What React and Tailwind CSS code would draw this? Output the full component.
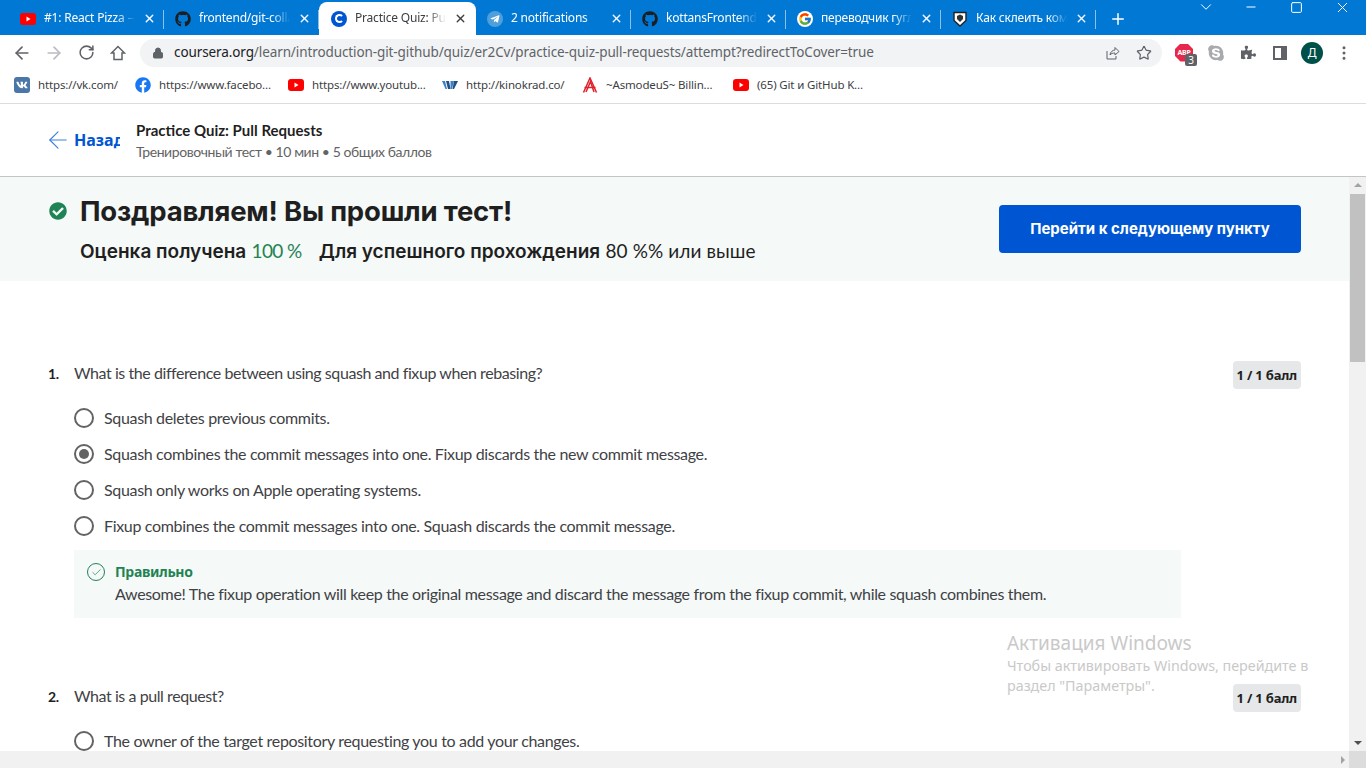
import { ArrowLeft, ArrowRight, RotateCw, Lock, Star, Plus, X, Minus, Square, ChevronDown, EllipsisVertical, Check } from "lucide-react";
import { FaGithub, FaTelegramPlane, FaVk, FaFacebook, FaSkype, FaPuzzlePiece, FaCheckCircle } from "react-icons/fa";
import { FcGoogle } from "react-icons/fc";

const YouTube = () => (
  <svg viewBox="0 0 16 16" className="w-4 h-4 shrink-0">
    <rect x="0" y="2" width="16" height="12" rx="3" fill="#f00" />
    <path d="M6.5 5.5v5l4-2.5z" fill="#fff" />
  </svg>
);

const Coursera = () => (
  <span className="w-4 h-4 shrink-0 rounded-full bg-[#0056d2] flex items-center justify-center">
    <span className="w-[9px] h-[9px] rounded-full border-2 border-white border-r-transparent" />
  </span>
);

const Telegram = () => (
  <span className="w-4 h-4 shrink-0 rounded-full bg-[#4f9fdc] flex items-center justify-center text-white">
    <FaTelegramPlane size={10} />
  </span>
);

const Shield = () => (
  <svg viewBox="0 0 16 16" className="w-4 h-4 shrink-0">
    <path d="M2 1.5h12v8L8 15 2 9.5z" fill="#fff" stroke="#222" strokeWidth="1.4" />
    <path d="M5 5l3-1.500L11 5v3l-3 3-3-3z" fill="#333" />
  </svg>
);

const Kinokrad = () => (
  <svg viewBox="0 0 16 16" className="w-4 h-4 shrink-0">
    <path d="M0 4h3l2 8h-1.500z" fill="#3b82c4" />
    <path d="M4 4h3l1.500 8H6z" fill="#1e4f86" />
    <path d="M8.500 4H12l-2 8H8.500z" fill="#3b82c4" />
    <path d="M12 4h4l-4 8h-1.500z" fill="#1e4f86" />
  </svg>
);

const RedA = () => (
  <svg viewBox="0 0 16 16" className="w-4 h-4 shrink-0" fill="none" stroke="#e0222b" strokeWidth="1.500">
    <path d="M1.500 15.500 8 1l6.500 14.500" />
    <path d="M4 15 8.500 4.500 12 15" />
    <path d="M2.500 10.500h11" />
  </svg>
);

const tabs = [
  { title: "#1: React Pizza — кур", icon: <YouTube /> },
  { title: "frontend/git-collab", icon: <FaGithub size={16} className="shrink-0 text-[#1b1f23]" /> },
  { title: "Practice Quiz: Pull Requests", icon: <Coursera />, active: true },
  { title: "2 notifications", icon: <Telegram /> },
  { title: "kottansFrontend/git", icon: <FaGithub size={16} className="shrink-0 text-[#1b1f23]" /> },
  { title: "переводчик гугл", icon: <span className="w-4 h-4 shrink-0 rounded-full bg-white flex items-center justify-center"><FcGoogle size={14} /></span> },
  { title: "Как склеить коммиты", icon: <Shield /> },
];

const bookmarks = [
  { label: "https://vk.com/", w: "w-[81px]", icon: <span className="w-4 h-4 shrink-0 rounded-[3px] bg-[#4a76a8] flex items-center justify-center text-white"><FaVk size={12} /></span> },
  { label: "https://www.facebo...", w: "w-[113px]", icon: <FaFacebook size={16} className="shrink-0 text-[#1877f2]" /> },
  { label: "https://www.youtub...", w: "w-[114px]", icon: <YouTube /> },
  { label: "http://kinokrad.co/", w: "w-[100px]", icon: <Kinokrad /> },
  { label: "~AsmodeuS~ Billin...", w: "w-[111px]", icon: <RedA /> },
  { label: "(65) Git и GitHub K...", w: "w-[109px]", icon: <YouTube /> },
];

const questions = [
  {
    n: "1.",
    text: "What is the difference between using squash and fixup when rebasing?",
    options: [
      { text: "Squash deletes previous commits." },
      { text: "Squash combines the commit messages into one. Fixup discards the new commit message.", checked: true },
      { text: "Squash only works on Apple operating systems." },
      { text: "Fixup combines the commit messages into one. Squash discards the commit message." },
    ],
    feedback: "Awesome! The fixup operation will keep the original message and discard the message from the fixup commit, while squash combines them.",
  },
  {
    n: "2.",
    text: "What is a pull request?",
    options: [{ text: "The owner of the target repository requesting you to add your changes." }],
  },
];

function Tab({ tab }) {
  if (tab.active) {
    return (
      <div className="w-[157px] h-[33px] shrink-0 bg-white rounded-t-lg flex items-center pl-[12px] pr-[9px] gap-[8px] text-[#3c4043]">
        {tab.icon}
        <span className="flex-1 -mt-[2px] overflow-hidden whitespace-nowrap tracking-[-0.2px] [mask-image:linear-gradient(to_right,black_80%,transparent)]">{tab.title}</span>
        <X size={13} strokeWidth={2.5} className="shrink-0" />
      </div>
    );
  }
  return (
    <div className="w-[155px] h-[33px] shrink-0 flex items-center pl-[11px] pr-[8px] gap-[8px] text-white relative">
      {tab.icon}
      <span className="flex-1 -mt-[2px] overflow-hidden whitespace-nowrap tracking-[-0.2px] [mask-image:linear-gradient(to_right,black_80%,transparent)]">{tab.title}</span>
      <X size={13} strokeWidth={2.5} className="shrink-0" />
      <span className="absolute right-0 top-[8px] h-[19px] w-px bg-[#8fc1e8]" />
    </div>
  );
}

function Radio({ checked }) {
  return (
    <span className="w-5 h-5 shrink-0 rounded-full border-2 border-[#636363] flex items-center justify-center">
      {checked && <span className="w-[10px] h-[10px] rounded-full bg-[#636363]" />}
    </span>
  );
}

function Question({ q }) {
  return (
    <section>
      <div className="flex items-center h-7">
        <span className="w-[26px] pb-[3px] text-[14px] font-bold text-[#1f1f1f]">{q.n}</span>
        <p className="flex-1 pb-[4px] tracking-[-0.43px]">{q.text}</p>
        <span className="h-7 px-[4px] pt-[1px] flex items-center rounded bg-[#e5e7e8] text-[13px] font-bold tracking-[-0.2px] text-[#1f1f1f] font-['Noto_Sans',sans-serif]">1 / 1 балл</span>
      </div>
      <div className="ml-[26px] mt-[11px] flex flex-col">
        {q.options.map((o) => (
          <div key={o.text} className="h-9 flex items-center gap-[10px]">
            <Radio checked={o.checked} />
            <span>{o.text}</span>
          </div>
        ))}
        {q.feedback && (
          <div className="mt-[6px] w-[1107px] h-[68px] bg-[#f5f9f8] flex pl-[13px] pt-[12px] gap-[10px]">
            <span className="w-[18px] h-[18px] mt-[1px] rounded-full border border-[#1f8354] flex items-center justify-center text-[#1f8354]">
              <Check size={11} strokeWidth={1.5} />
            </span>
            <div>
              <p className="text-[14px] leading-[20px] font-bold text-[#1f8354] font-['Noto_Sans',sans-serif]">Правильно</p>
              <p className="leading-[24px]">{q.feedback}</p>
            </div>
          </div>
        )}
      </div>
    </section>
  );
}

export default function App() {
  return (
    <div className="h-screen flex flex-col overflow-hidden bg-white text-[#3f4245] font-['Noto_Sans',sans-serif] relative">
      {/* tab strip */}
      <div className="h-[35px] shrink-0 bg-[#0078d4] flex items-end pl-[9px] text-[12px] text-white">
        <div className="flex items-center">
          {tabs.map((t) => (
            <Tab key={t.title} tab={t} />
          ))}
          <Plus size={18} strokeWidth={2} className="ml-[13px]" />
        </div>
        <div className="flex-1 self-start flex justify-end items-center h-[14px] text-white">
          <ChevronDown size={18} strokeWidth={1} absoluteStrokeWidth className="mr-[29px]" />
          <Minus size={14} strokeWidth={1} absoluteStrokeWidth className="mr-[32px]" />
          <Square size={13} strokeWidth={1} absoluteStrokeWidth className="mr-[31px]" />
          <X size={17} strokeWidth={1} absoluteStrokeWidth className="mr-[15px]" />
        </div>
      </div>

      {/* toolbar */}
      <div className="h-[35px] shrink-0 flex items-center text-[#5f6368]">
        <div className="w-[140px] shrink-0 flex items-center pl-[6px]">
          <span className="w-8 flex justify-center"><ArrowLeft size={20} /></span>
          <span className="w-8 flex justify-center"><ArrowRight size={20} className="text-[#b9bcc0]" /></span>
          <span className="w-8 flex justify-center"><RotateCw size={17} strokeWidth={2.2} /></span>
          <span className="w-8 flex justify-center">
            <svg viewBox="0 0 16 16" className="w-4 h-4" fill="none" stroke="currentColor" strokeWidth="1.500">
              <path d="M8 1.500 1.500 8H4v6.500h8V8h2.500z" />
            </svg>
          </span>
        </div>
        <div className="w-[1022px] shrink-0 h-7 rounded-full bg-[#f1f3f4] flex items-center pl-[12px] pr-[10px] text-[13.500px]">
          <Lock size={12} fill="currentColor" className="shrink-0" />
          <span className="ml-[10px] flex-1 whitespace-nowrap tracking-[-0.1px]">
            <span className="text-[#202124]">coursera.org</span>/learn/introduction-git-github/quiz/er2Cv/practice-quiz-pull-requests/attempt?redirectToCover=true
          </span>
          <svg viewBox="0 0 16 16" className="w-4 h-4 mr-[16px]" fill="none" stroke="currentColor" strokeWidth="1">
            <path d="M3 6v8h9v-3M6 10c0-3 3-5 5-5V2.500L15 6.500l-4 3.500V8c-2 0-4 .500-5 2z" />
          </svg>
          <Star size={16} strokeWidth={1.8} />
        </div>
        <div className="flex items-center pl-[6px]">
          <span className="w-8 flex justify-center">
            <span className="relative w-[18px] h-[18px]">
              <span className="block w-[18px] h-[18px] bg-[#e8284b] [clip-path:polygon(30%_0,70%_0,100%_30%,100%_70%,70%_100%,30%_100%,0_70%,0_30%)] text-white text-[7px] leading-[18px] font-bold text-center tracking-[-0.3px]">ABP</span>
              <span className="absolute left-[10px] top-[10px] w-[12px] h-[12px] rounded-[2px] bg-[#5f6368] text-white text-[10px] leading-[12px] text-center">3</span>
            </span>
          </span>
          <span className="w-8 flex justify-center"><FaSkype size={18} className="text-[#a8aaad]" /></span>
          <span className="w-8 flex justify-center"><FaPuzzlePiece size={15} /></span>
          <span className="w-8 flex justify-center"><span className="w-[14px] h-[14px] border-2 border-[#5f6368] border-r-[6px]" /></span>
          <span className="w-8 flex justify-center"><span className="w-[22px] h-[22px] rounded-full bg-[#00504a] text-white text-[12px] flex items-center justify-center">Д</span></span>
          <span className="w-8 flex justify-center"><EllipsisVertical size={18} /></span>
        </div>
      </div>

      {/* bookmarks */}
      <div className="h-[34px] shrink-0 flex items-center pl-[14px] pb-[3px] gap-[16px] border-b border-[#dadce0] text-[11.500px] text-[#3c4043]">
        {bookmarks.map((b) => (
          <div key={b.label} className="flex items-center gap-[8px]">
            {b.icon}
            <span className={`${b.w} whitespace-nowrap overflow-hidden tracking-[-0.15px]`}>{b.label}</span>
          </div>
        ))}
      </div>

      {/* quiz header */}
      <header className="h-[73px] shrink-0 flex items-center pl-[44px] border-b border-[#c4c4c4]">
        <ArrowLeft size={28} strokeWidth={1} className="text-[#3d82e0]" />
        <span className="ml-[2px] w-[46px] overflow-hidden text-[16px] font-bold text-[#0056d2]">Назад</span>
        <div className="ml-[16px] leading-[21px] pt-[2px] font-['Lato','Noto_Sans',sans-serif]">
          <p className="text-[15px] font-bold text-[#1f1f1f]">Practice Quiz: Pull Requests</p>
          <p className="text-[14px] tracking-[-0.43px] text-[#636363]">Тренировочный тест • 10 мин • 5 общих баллов</p>
        </div>
      </header>

      {/* page with scrollbars */}
      <div className="flex-1 min-h-0 flex">
        <main className="flex-1 min-w-0 overflow-hidden">
          <div className="h-[104px] bg-[#f5f9f8] flex items-center justify-between pl-[49px] pr-[48px]">
            <div className="flex gap-[13px]">
              <FaCheckCircle size={18} className="text-[#1f8354] mt-[9px]" />
              <div>
                <h1 className="text-[27.500px] leading-[36px] font-bold tracking-[-0.2px] text-[#1f1f1f] font-['Inter',sans-serif]">Поздравляем! Вы прошли тест!</h1>
                <p className="mt-[8px] text-[19px] leading-[28px] text-[#1f1f1f] flex gap-[17px] font-['Inter',sans-serif]">
                  <span><b className="font-semibold">Оценка получена</b> <span className="text-[#1f8354] font-normal tracking-[-0.6px] font-['Lato','Noto_Sans',sans-serif]">100 %</span></span>
                  <span><b className="font-semibold">Для успешного прохождения</b> <span className="tracking-[0.1px] font-['Lato','Noto_Sans',sans-serif]">80 %% или выше</span></span>
                </p>
              </div>
            </div>
            <button className="w-[302px] h-12 rounded bg-[#0056d2] text-white text-[15px] font-bold font-['Inter',sans-serif]">Перейти к следующему пункту</button>
          </div>
          <div className="pl-[48px] pr-[48px] pt-[80px] flex flex-col gap-[66px] text-[16px] tracking-[-0.33px] font-['Lato','Noto_Sans',sans-serif]">
            {questions.map((q) => (
              <Question key={q.n} q={q} />
            ))}
          </div>
        </main>
        <div className="w-[17px] shrink-0 bg-[#f1f1f1] flex flex-col items-center">
          <span className="mt-[6px] w-0 h-0 border-x-[4px] border-x-transparent border-b-[4px] border-b-[#a3a3a3]" />
          <span className="mt-[7px] w-[15px] h-[168px] bg-[#c1c1c1]" />
          <span className="mt-auto mb-[6px] w-0 h-0 border-x-[4px] border-x-transparent border-t-[4px] border-t-[#505050]" />
        </div>
      </div>
      <div className="h-[17px] shrink-0 flex bg-[#f1f1f1]">
        <div className="flex-1 flex items-center justify-end pr-[4px]">
          <span className="w-0 h-0 border-y-[4px] border-y-transparent border-l-[4px] border-l-[#a3a3a3]" />
        </div>
        <div className="w-[17px] bg-[#dcdcdc]" />
      </div>

      {/* windows activation watermark */}
      <div className="absolute left-[1007px] top-[630px] w-[320px] text-[#c9c9c9] pointer-events-none">
        <p className="text-[19px] leading-[26px]">Активация Windows</p>
        <p className="text-[14.300px] leading-[20px]">Чтобы активировать Windows, перейдите в<br />раздел "Параметры".</p>
      </div>
    </div>
  );
}
